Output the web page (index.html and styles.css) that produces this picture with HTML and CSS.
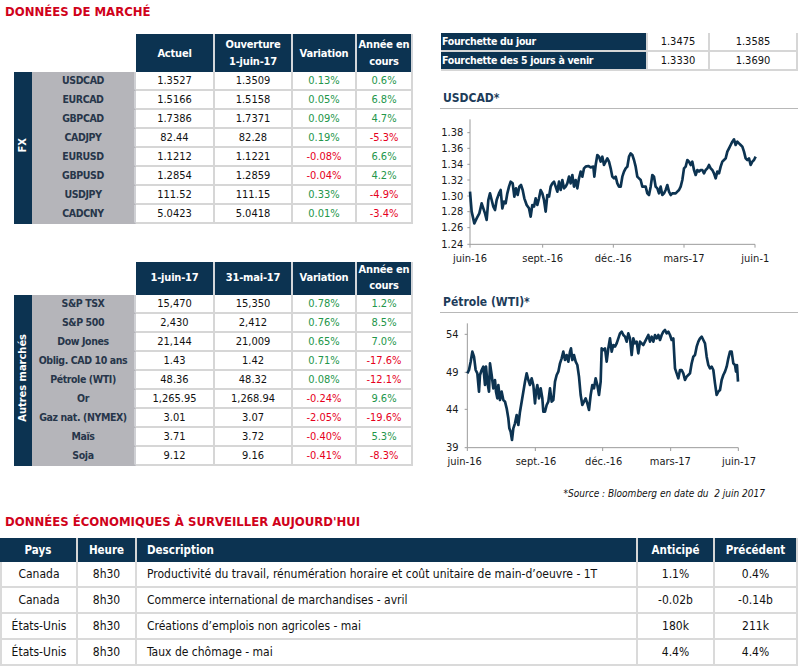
FILE: index.html
```html
<!DOCTYPE html>
<html lang="fr">
<head>
<meta charset="utf-8">
<title>Données de marché</title>
<link rel="stylesheet" href="styles.css">
</head>
<body>
<div class="page">
  <div class="top">
    <div class="left">
      <h1 class="title">DONNÉES DE MARCHÉ</h1>
      <table class="mkt fx">
        <colgroup><col class="c-strip"><col class="c-lbl"><col class="c-a"><col class="c-b"><col class="c-c"><col class="c-d"></colgroup>
        <thead>
          <tr><th class="blank" colspan="2"></th><th>Actuel</th><th>Ouverture<br>1-juin-17</th><th>Variation</th><th>Année en<br>cours</th></tr>
        </thead>
        <tbody>
          <tr><td class="strip" rowspan="8"><span class="vert">FX</span></td><td class="lbl">USDCAD</td><td>1.3527</td><td>1.3509</td><td class="up">0.13%</td><td class="up">0.6%</td></tr>
          <tr><td class="lbl">EURCAD</td><td>1.5166</td><td>1.5158</td><td class="up">0.05%</td><td class="up">6.8%</td></tr>
          <tr><td class="lbl">GBPCAD</td><td>1.7386</td><td>1.7371</td><td class="up">0.09%</td><td class="up">4.7%</td></tr>
          <tr><td class="lbl">CADJPY</td><td>82.44</td><td>82.28</td><td class="up">0.19%</td><td class="dn">-5.3%</td></tr>
          <tr><td class="lbl">EURUSD</td><td>1.1212</td><td>1.1221</td><td class="dn">-0.08%</td><td class="up">6.6%</td></tr>
          <tr><td class="lbl">GBPUSD</td><td>1.2854</td><td>1.2859</td><td class="dn">-0.04%</td><td class="up">4.2%</td></tr>
          <tr><td class="lbl">USDJPY</td><td>111.52</td><td>111.15</td><td class="up">0.33%</td><td class="dn">-4.9%</td></tr>
          <tr><td class="lbl">CADCNY</td><td>5.0423</td><td>5.0418</td><td class="up">0.01%</td><td class="dn">-3.4%</td></tr>
        </tbody>
      </table>

      <table class="mkt other">
        <colgroup><col class="c-strip"><col class="c-lbl"><col class="c-a"><col class="c-b"><col class="c-c"><col class="c-d"></colgroup>
        <thead>
          <tr><th class="blank" colspan="2"></th><th>1-juin-17</th><th>31-mai-17</th><th>Variation</th><th>Année en<br>cours</th></tr>
        </thead>
        <tbody>
          <tr><td class="strip" rowspan="9"><span class="vert">Autres marchés</span></td><td class="lbl">S&amp;P TSX</td><td>15,470</td><td>15,350</td><td class="up">0.78%</td><td class="up">1.2%</td></tr>
          <tr><td class="lbl">S&amp;P 500</td><td>2,430</td><td>2,412</td><td class="up">0.76%</td><td class="up">8.5%</td></tr>
          <tr><td class="lbl">Dow Jones</td><td>21,144</td><td>21,009</td><td class="up">0.65%</td><td class="up">7.0%</td></tr>
          <tr><td class="lbl">Oblig. CAD 10 ans</td><td>1.43</td><td>1.42</td><td class="up">0.71%</td><td class="dn">-17.6%</td></tr>
          <tr><td class="lbl">Pétrole (WTI)</td><td>48.36</td><td>48.32</td><td class="up">0.08%</td><td class="dn">-12.1%</td></tr>
          <tr><td class="lbl">Or</td><td>1,265.95</td><td>1,268.94</td><td class="dn">-0.24%</td><td class="up">9.6%</td></tr>
          <tr><td class="lbl">Gaz nat. (NYMEX)</td><td>3.01</td><td>3.07</td><td class="dn">-2.05%</td><td class="dn">-19.6%</td></tr>
          <tr><td class="lbl">Maïs</td><td>3.71</td><td>3.72</td><td class="dn">-0.40%</td><td class="up">5.3%</td></tr>
          <tr><td class="lbl">Soja</td><td>9.12</td><td>9.16</td><td class="dn">-0.41%</td><td class="dn">-8.3%</td></tr>
        </tbody>
      </table>
    </div>

    <div class="right">
      <table class="range">
        <colgroup><col class="r-lbl"><col class="r-a"><col class="r-b"></colgroup>
        <tr><td class="rl">Fourchette du jour</td><td>1.3475</td><td>1.3585</td></tr>
        <tr><td class="rl">Fourchette des 5 jours à venir</td><td>1.3330</td><td>1.3690</td></tr>
      </table>

      <div class="chart chart-1">
        <div class="chart-title">USDCAD*</div>
        <svg width="358" height="155" viewBox="30 87 1074 465">
          <path class="axis" d="M120 118 V493 H975 M112 158 H120 M112 205 H120 M112 253 H120 M112 300 H120 M112 348 H120 M112 395 H120 M112 443 H120 M112 493 H120 M120 493 V503 M338 493 V503 M550 493 V503 M762 493 V503 M975 493 V503"/>
          <g class="ylab">
            <text x="100" y="169">1.38</text>
            <text x="100" y="216">1.36</text>
            <text x="100" y="264">1.34</text>
            <text x="100" y="311">1.32</text>
            <text x="100" y="359">1.30</text>
            <text x="100" y="406">1.28</text>
            <text x="100" y="454">1.26</text>
            <text x="100" y="504">1.24</text>
          </g>
          <g class="xlab">
            <text x="120" y="546">juin-16</text>
            <text x="338" y="546">sept.-16</text>
            <text x="550" y="546">déc.-16</text>
            <text x="762" y="546">mars-17</text>
            <text x="934" y="546" class="start">juin-1</text>
          </g>
          <polyline class="series" points="120,335 125,395 133,430 140,415 148,400 155,370 160,385 165,400 170,420 175,360 180,340 185,360 190,380 195,390 200,360 207,340 212,330 217,385 222,365 227,370 232,340 237,320 242,305 248,310 253,350 258,325 263,345 268,320 273,315 278,330 283,355 290,375 297,385 302,410 307,375 312,380 317,355 322,375 327,355 332,330 337,340 342,360 347,395 352,345 357,350 362,320 367,310 372,305 377,320 382,335 387,305 392,330 397,300 402,325 407,320 412,310 417,290 422,310 427,285 432,320 437,300 442,325 447,295 452,275 457,290 462,265 467,260 475,258 482,262 490,260 493,290 497,255 502,225 507,230 512,245 517,230 522,255 527,245 532,235 537,245 542,265 547,290 552,295 557,290 562,310 567,320 572,320 577,290 582,275 587,265 592,260 597,230 602,220 607,225 612,240 617,260 622,290 627,295 632,300 637,320 642,320 647,320 652,340 657,345 662,320 667,285 672,290 677,320 682,325 687,340 692,320 697,345 702,340 707,330 712,315 717,335 722,345 727,340 732,340 737,340 742,335 747,330 752,320 757,300 762,265 767,260 772,240 777,245 782,255 787,245 792,270 797,285 802,270 807,275 812,270 817,270 822,280 827,270 832,265 837,255 842,265 847,270 852,280 857,295 862,275 867,280 872,260 877,245 882,240 887,235 892,215 897,205 902,195 907,185 912,178 917,195 922,185 927,190 932,195 937,200 942,215 947,235 952,240 957,235 962,255 967,245 972,240 977,230"/>
        </svg>
      </div>

      <div class="chart chart-2">
        <div class="chart-title">Pétrole (WTI)*</div>
        <svg width="358" height="157" viewBox="30 84 1074 471">
          <path class="axis" d="M112 115 V488 H925 M104 148 H112 M104 262 H112 M104 373 H112 M104 488 H112 M112 488 V498 M316 488 V498 M518 488 V498 M722 488 V498 M925 488 V498"/>
          <g class="ylab">
            <text x="86" y="159">54</text>
            <text x="86" y="273">49</text>
            <text x="86" y="384">44</text>
            <text x="86" y="498">39</text>
          </g>
          <g class="xlab">
            <text x="104" y="540">juin-16</text>
            <text x="318" y="540">sept.-16</text>
            <text x="521" y="540">déc.-16</text>
            <text x="721" y="540">mars-17</text>
            <text x="927" y="540">juin-17</text>
          </g>
          <polyline class="series" points="112,265 117,255 122,230 127,200 132,215 137,255 142,265 147,320 150,270 155,255 160,245 165,300 168,245 172,290 177,320 180,235 185,270 190,310 195,285 198,320 202,340 205,300 210,345 215,320 220,345 225,350 230,370 235,400 238,430 242,440 246,465 250,430 255,415 260,390 265,420 270,380 275,350 280,320 285,290 290,265 295,285 300,300 305,280 310,300 315,355 318,320 322,300 327,340 332,310 337,340 340,380 345,380 350,360 355,350 360,310 365,350 370,345 375,290 380,270 385,260 390,235 395,220 400,200 405,225 410,210 415,230 420,200 423,190 427,225 432,210 437,230 442,240 447,275 452,330 457,360 462,350 467,340 472,355 477,375 482,330 487,300 492,310 497,280 502,300 507,330 512,290 515,190 520,195 525,190 530,230 535,190 540,160 545,200 550,180 555,185 560,175 565,160 570,145 575,140 580,150 585,155 590,170 595,145 600,160 605,210 610,160 615,175 620,170 625,205 630,170 635,175 640,180 645,170 650,160 655,150 660,170 665,155 670,170 675,150 680,160 685,150 690,165 695,150 700,140 705,135 710,145 715,140 720,150 725,165 730,160 735,250 740,265 745,280 750,255 755,255 760,265 765,285 770,275 775,270 780,265 785,235 790,215 795,210 800,185 805,170 810,160 815,155 820,165 825,175 830,215 835,240 840,250 845,245 850,255 855,295 860,330 865,320 870,315 875,285 880,270 885,260 890,245 895,220 900,200 905,200 910,235 915,240 918,260 921,240 924,290"/>
        </svg>
      </div>
    </div>
  </div>

  <div class="source">*Source : Bloomberg en date du &nbsp;2 juin 2017</div>

  <h2 class="eco-title">DONNÉES ÉCONOMIQUES À SURVEILLER AUJOURD'HUI</h2>
  <table class="eco">
    <colgroup><col class="e-pays"><col class="e-heure"><col class="e-desc"><col class="e-ant"><col class="e-prec"></colgroup>
    <thead>
      <tr><th>Pays</th><th>Heure</th><th class="desc">Description</th><th>Anticipé</th><th>Précédent</th></tr>
    </thead>
    <tbody>
      <tr><td>Canada</td><td>8h30</td><td class="desc">Productivité du travail, rénumération horaire et coût unitaire de main-d’oeuvre - 1T</td><td>1.1%</td><td>0.4%</td></tr>
      <tr><td>Canada</td><td>8h30</td><td class="desc">Commerce international de marchandises - avril</td><td>-0.02b</td><td>-0.14b</td></tr>
      <tr><td>États-Unis</td><td>8h30</td><td class="desc">Créations d’emplois non agricoles - mai</td><td>180k</td><td>211k</td></tr>
      <tr><td>États-Unis</td><td>8h30</td><td class="desc">Taux de chômage - mai</td><td>4.4%</td><td>4.4%</td></tr>
    </tbody>
  </table>
</div>
</body>
</html>
```

FILE: styles.css
```css
* { box-sizing: border-box; }

body {
  margin: 0;
  background: #fff;
  color: #111;
  font-family: "DejaVu Sans Condensed", "DejaVu Sans", sans-serif;
  font-stretch: condensed;
}

.page {
  width: 805px;
  height: 669px;
  overflow: hidden;
}

.top {
  display: flex;
  height: 470px;
}

.left {
  width: 440px;
  padding-left: 5px;
}

.title {
  margin: 0;
  padding-top: 3px;
  height: 21px;
  font-size: 13px;
  line-height: 18px;
  font-weight: bold;
  color: #d0021b;
}

/* market tables */
.mkt {
  margin-left: 9px;
  border-collapse: separate;
  border-spacing: 0;
  table-layout: fixed;
  width: 399px;
  font-size: 11px;
  text-align: center;
}
.fx { margin-top: 13px; }
.other { margin-top: 38px; }

.c-strip { width: 18px; }
.c-lbl { width: 104px; }
.c-a { width: 79px; }
.c-b { width: 78px; }
.c-c { width: 64px; }
.c-d { width: 56px; }

.mkt th {
  background: #0c3351;
  color: #fff;
  font-weight: bold;
  line-height: 17px;
  padding: 2px 0;
  letter-spacing: -0.2px;
  border-right: 2px solid #d3d6da;
}
.other th {
  line-height: 16px;
  padding: 0 0 1px;
}
.mkt th.blank {
  background: #fff;
  border: 0;
}
.mkt td {
  padding: 0;
  line-height: 17px;
  border-right: 2px solid #d6d6d6;
  border-bottom: 2px solid #d6d6d6;
  white-space: nowrap;
}
.mkt td.strip {
  background: #0c3351;
  border: 0;
  color: #fff;
  font-weight: bold;
  vertical-align: middle;
}
.vert {
  display: inline-block;
  writing-mode: vertical-rl;
  transform: rotate(180deg);
  line-height: 18px;
}
.mkt td.lbl {
  background: #b5b5ba;
  border-bottom-color: #b5b5ba;
  border-right-color: #cfd0d4;
  font-size: 10.5px;
  letter-spacing: -0.4px;
  font-weight: bold;
  color: #27364a;
}
.up { color: #23964a; }
.dn { color: #e6001c; }

/* right column */
.right {
  width: 358px;
  padding-top: 33px;
}
.range {
  margin-left: 1px;
  border-collapse: separate;
  border-spacing: 0;
  table-layout: fixed;
  width: 357px;
  font-size: 11px;
}
.r-lbl { width: 207px; }
.r-a { width: 62px; }
.r-b { width: 88px; }
.range td {
  padding: 0;
  line-height: 17px;
  text-align: center;
  border-right: 2px solid #d6d6d6;
  border-bottom: 2px solid #d6d6d6;
}
.range td.rl {
  background: #0c3351;
  color: #fff;
  font-size: 10.5px;
  letter-spacing: -0.3px;
  font-weight: bold;
  text-align: left;
  padding-left: 1px;
}

.chart-1 { margin-top: 17px; }
.chart-2 { margin-top: 28px; }
.chart-title {
  height: 21px;
  line-height: 20px;
  padding-left: 3px;
  font-size: 12px;
  font-weight: bold;
  color: #1d3c5a;
  border-bottom: 1px solid #b8b8b8;
}
.chart svg { display: block; }
.axis {
  fill: none;
  stroke: #9c9c9c;
  stroke-width: 3;
}
.series {
  fill: none;
  stroke: #0c3351;
  stroke-width: 8;
  stroke-linejoin: round;
}
.ylab text {
  font-size: 33px;
  fill: #1a1a1a;
  text-anchor: end;
}
.xlab text {
  font-size: 33px;
  fill: #1a1a1a;
  text-anchor: middle;
}
.xlab text.start { text-anchor: start; }

/* source + eco */
.source {
  margin-top: 17px;
  padding-right: 40px;
  text-align: right;
  font-size: 10px;
  line-height: 14px;
  font-style: italic;
  color: #111;
}
.eco-title {
  margin: 12px 0 0;
  padding-left: 5px;
  height: 18px;
  font-size: 13px;
  line-height: 18px;
  font-weight: bold;
  color: #d0021b;
}
.eco {
  margin-top: 7px;
  width: 798px;
  border-collapse: separate;
  border-spacing: 0;
  table-layout: fixed;
  font-size: 12px;
  text-align: center;
}
.e-pays { width: 78px; }
.e-heure { width: 59px; }
.e-desc { width: 501px; }
.e-ant { width: 77px; }
.e-prec { width: 83px; }
.eco th {
  background: #0c3351;
  color: #fff;
  font-size: 11.5px;
  font-weight: bold;
  line-height: 24px;
  padding: 0;
  border-right: 2px solid #d6d6d6;
}
.eco td {
  padding: 1px 0 0;
  line-height: 23px;
  border-right: 2px solid #dadada;
  border-bottom: 2px solid #dadada;
  white-space: nowrap;
}
.eco td:first-child { border-left: 2px solid #dadada; }
.eco .desc {
  text-align: left;
  padding-left: 10px;
}
```
